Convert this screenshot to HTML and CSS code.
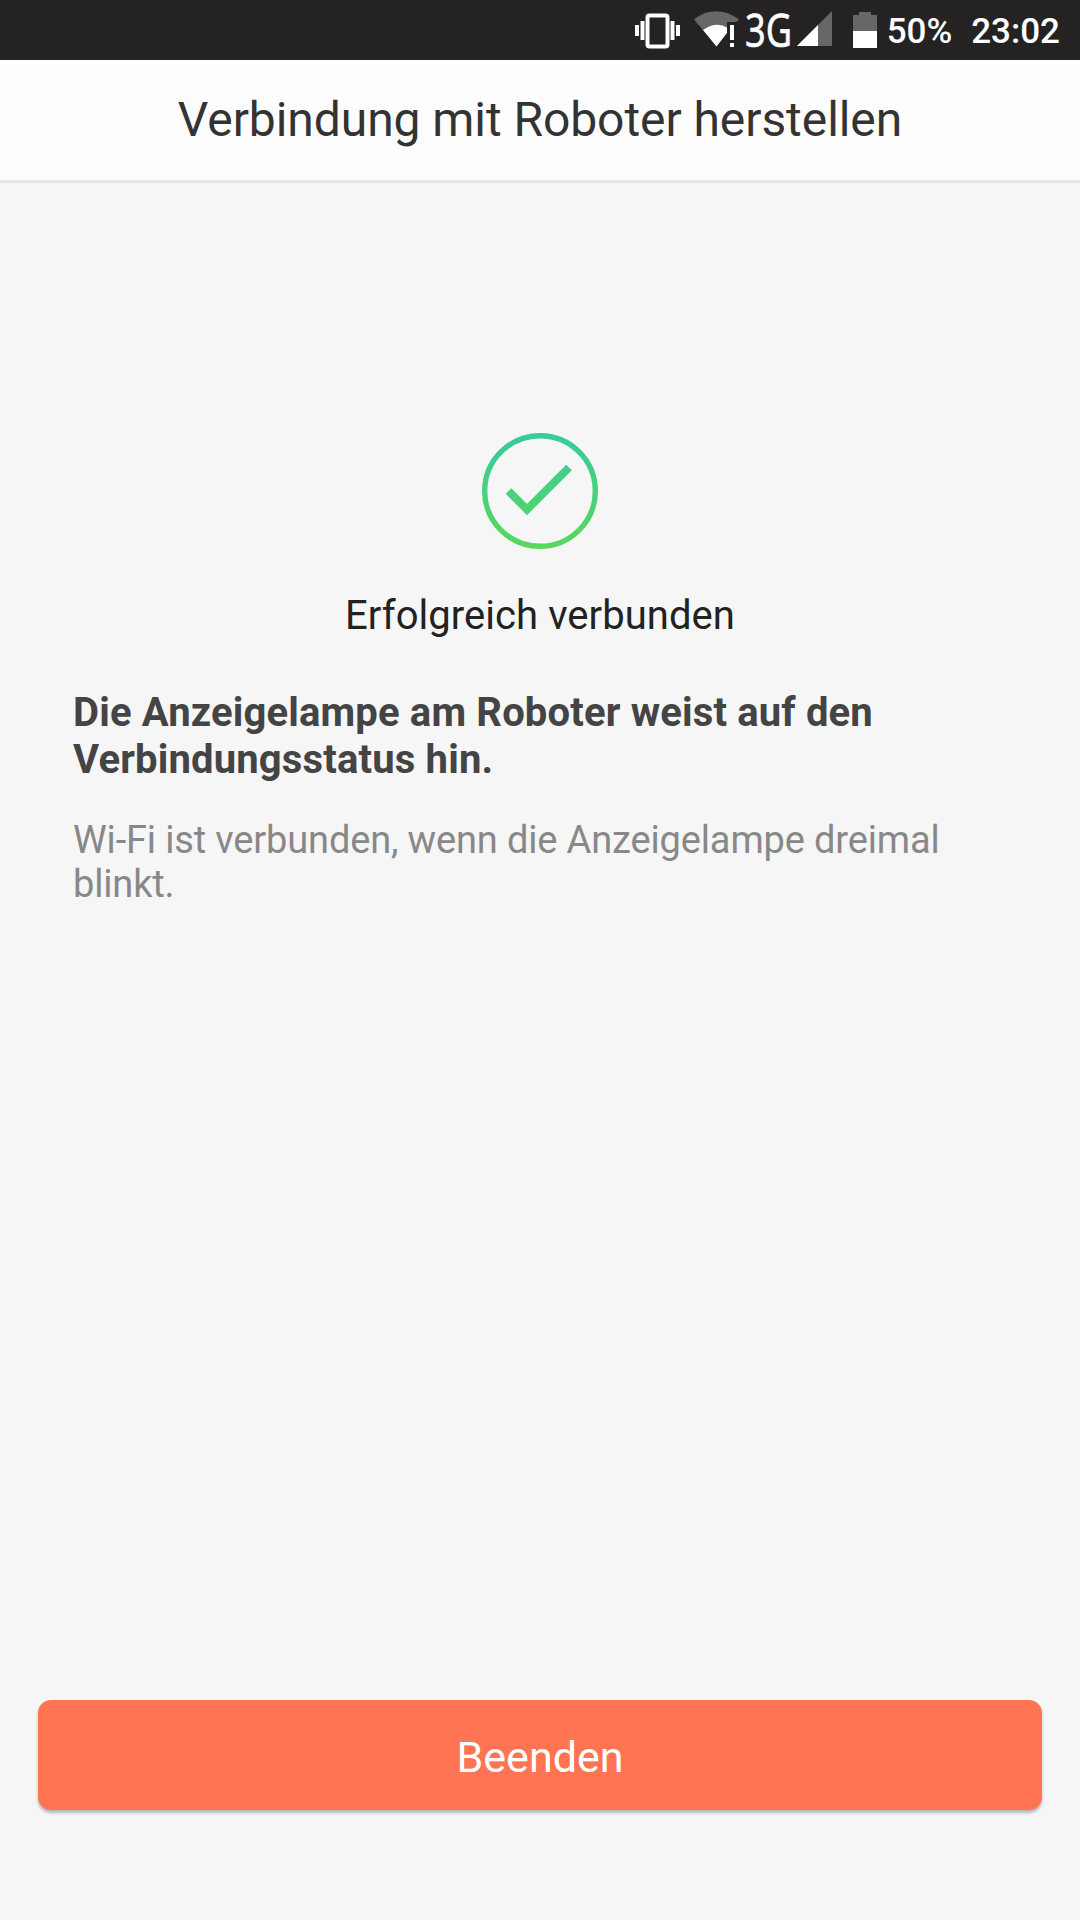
FILE: index.html
```html
<!DOCTYPE html>
<html lang="de">
<head>
    <meta charset="UTF-8">
    <meta name="viewport" content="width=device-width, initial-scale=1.0">
    <title>Verbindung mit Roboter herstellen</title>
    <link rel="stylesheet" href="styles.css">
</head>
<body>
    <div class="screen">
        <div class="status-bar">
            <svg class="icon-vibrate" width="46" height="36" viewBox="0 0 46 36">
                <rect x="12.500" y="2.500" width="20" height="31" rx="2" fill="none" stroke="#fff" stroke-width="4"/>
                <path d="M0 12h4v11H0zM5.500 8h4v19h-4zM35.500 8h4v19h-4zM41 12h4v11h-4z" fill="#fff"/>
            </svg>
            <svg class="icon-wifi" width="46" height="36" viewBox="0 0 46 36">
                <path d="M0 8.500C13-2.500 31-2.500 45 8.500L42.500 11H33v9L22.500 35z" fill="#686667"/>
                <path d="M9 19Q22 10 33 16.500V22L22.500 35.500z" fill="#fff"/>
                <path d="M36 14h4v15h-4zM36 32h4v4h-4z" fill="#fff"/>
            </svg>
            <svg class="icon-network" width="48" height="60" viewBox="0 0 48 60">
                <text x="0" y="47" textLength="47" lengthAdjust="spacingAndGlyphs">3G</text>
            </svg>
            <svg class="icon-signal" width="35" height="35" viewBox="0 0 35 35">
                <path d="M35 0v35H0z" fill="#686667"/>
                <path d="M21 14v21H0z" fill="#fff"/>
            </svg>
            <svg class="icon-battery" width="24" height="36" viewBox="0 0 24 36">
                <path d="M6 0h12v3h6v16H0V3h6z" fill="#686667"/>
                <path d="M0 19h24v17H0z" fill="#fff"/>
            </svg>
            <span class="battery-level">50%</span>
            <span class="clock">23:02</span>
        </div>

        <div class="header">
            <h1>Verbindung mit Roboter herstellen</h1>
        </div>

        <div class="content">
            <svg class="icon-success" width="116" height="116" viewBox="0 0 116 116">
                <defs>
                    <linearGradient id="success" gradientUnits="userSpaceOnUse" x1="0" y1="0" x2="0" y2="116">
                        <stop offset="0" stop-color="#36cb9f"/>
                        <stop offset="1" stop-color="#5bd75c"/>
                    </linearGradient>
                </defs>
                <g fill="none" stroke="url(#success)">
                    <circle cx="58" cy="58" r="55.300" stroke-width="5.400"/>
                    <path d="M26.500 58L45 76.500L87 34.500" stroke-width="8"/>
                </g>
            </svg>
            <p class="result">Erfolgreich verbunden</p>
            <h2>Die Anzeigelampe am Roboter weist auf den Verbindungsstatus hin.</h2>
            <p class="hint">Wi-Fi ist verbunden, wenn die Anzeigelampe dreimal blinkt.</p>
        </div>

        <div class="footer">
            <button class="button">Beenden</button>
        </div>
    </div>
</body>
</html>
```

FILE: styles.css
```css
* {
    box-sizing: border-box;
    margin: 0;
    padding: 0;
}

body {
    font-family: Roboto, sans-serif;
    background: #f6f6f6;
    color: #333;
}

svg {
    display: block;
    flex-shrink: 0;
}

.screen {
    display: flex;
    flex-direction: column;
    height: 1920px;
}

.status-bar {
    display: flex;
    justify-content: flex-end;
    height: 60px;
    padding-right: 20px;
    background: #242223;
    color: #fff;
    font-size: 35px;
    font-weight: 500;
    line-height: 63px;
}

.icon-vibrate {
    margin-top: 13px;
}

.icon-wifi {
    margin: 11px 0 0 13px;
}

.icon-network {
    margin-left: 5px;
    overflow: visible;
    font-family: "Noto Sans", sans-serif;
    font-size: 46px;
    font-weight: 400;
    line-height: 1;
    fill: #fff;
    stroke: #fff;
    stroke-width: 0.6px;
}

.icon-signal {
    margin: 11px 0 0 4px;
}

.icon-battery {
    margin: 12px 10px 0 21px;
}

.clock {
    margin-left: 19px;
}

.header {
    height: 123px;
    background: #fdfdfd;
    border-bottom: 3px solid #e6e6e6;
    text-align: center;
}

.header h1 {
    font-size: 48px;
    font-weight: 400;
    line-height: 120px;
    letter-spacing: -0.07px;
}

.content {
    flex: 1;
    padding: 250px 73px 0;
}

.icon-success {
    margin: 0 auto 43px;
}

.result {
    margin-bottom: 49px;
    color: #222;
    font-size: 40px;
    line-height: 48px;
    letter-spacing: 0.05px;
    text-align: center;
}

.content h2 {
    margin-bottom: 35px;
    color: #444;
    font-size: 40px;
    font-weight: 700;
    line-height: 47px;
    letter-spacing: 0.16px;
}

.hint {
    color: #888;
    font-size: 38px;
    line-height: 44px;
    letter-spacing: -0.15px;
}

.footer {
    padding: 0 38px 110px;
}

.button {
    display: block;
    width: 100%;
    height: 110px;
    padding-top: 3px;
    border: none;
    border-radius: 13px;
    background: #ff7452;
    box-shadow: 0 3px 3px rgba(0, 0, 0, 0.25);
    color: #fff;
    font-family: inherit;
    font-size: 43px;
}
```
